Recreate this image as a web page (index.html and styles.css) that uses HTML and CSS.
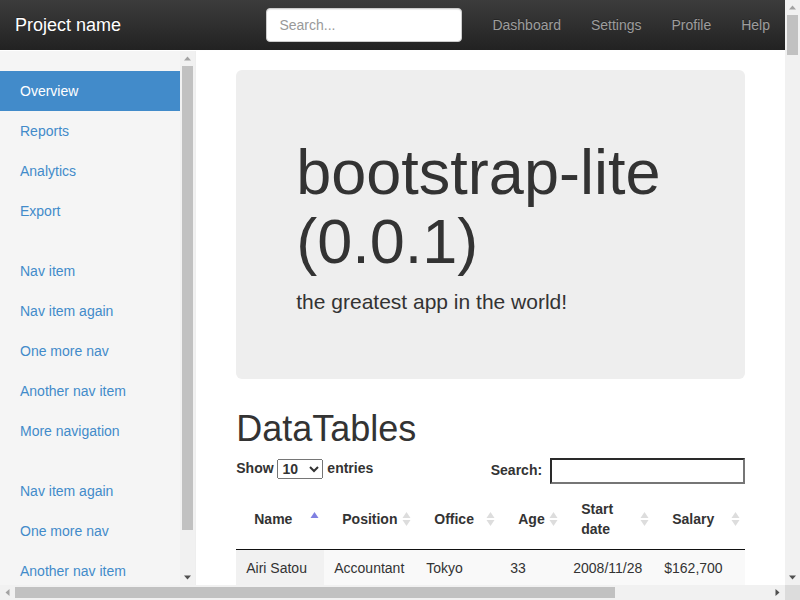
FILE: index.html
```html
<!DOCTYPE html>
<html lang="en">
<head>
<meta charset="utf-8">
<title>bootstrap-lite</title>
<link rel="stylesheet" href="styles.css">
</head>
<body>
<nav class="navbar">
  <a class="brand" href="#">Project name</a>
  <div class="navbar-right">
    <form class="navbar-form">
      <input class="search" type="text" placeholder="Search...">
    </form>
    <ul class="navbar-nav">
      <li><a href="#">Dashboard</a></li>
      <li><a href="#">Settings</a></li>
      <li><a href="#">Profile</a></li>
      <li><a href="#">Help</a></li>
    </ul>
  </div>
</nav>

<aside class="sidebar">
  <div class="sidebar-inner">
    <ul class="nav-sidebar">
      <li class="active"><a href="#">Overview</a></li>
      <li><a href="#">Reports</a></li>
      <li><a href="#">Analytics</a></li>
      <li><a href="#">Export</a></li>
    </ul>
    <ul class="nav-sidebar">
      <li><a href="#">Nav item</a></li>
      <li><a href="#">Nav item again</a></li>
      <li><a href="#">One more nav</a></li>
      <li><a href="#">Another nav item</a></li>
      <li><a href="#">More navigation</a></li>
    </ul>
    <ul class="nav-sidebar">
      <li><a href="#">Nav item again</a></li>
      <li><a href="#">One more nav</a></li>
      <li><a href="#">Another nav item</a></li>
    </ul>
  </div>
  <div class="vscroll">
    <svg class="sb-btn" width="15" height="15" viewBox="0 0 15 15"><polygon class="arrow-off" points="4,9.5 7.5,5.5 11,9.5"/></svg>
    <div class="vtrack"><div class="thumb sidebar-thumb"></div></div>
    <svg class="sb-btn" width="15" height="15" viewBox="0 0 15 15"><polygon class="arrow-on" points="4,5.5 11,5.5 7.5,9.5"/></svg>
  </div>
</aside>

<main class="main">
  <div class="jumbotron">
    <h1 class="jumbo-title">bootstrap-lite (0.0.1)</h1>
    <p class="jumbo-lead">the greatest app in the world!</p>
  </div>

  <h1 class="section-title">DataTables</h1>

  <div class="dt-wrapper">
    <div class="dt-controls">
      <label class="dt-length">Show <select class="dt-select"><option>10</option><option>25</option><option>50</option><option>100</option></select> entries</label>
      <label class="dt-filter">Search: <input class="dt-search" type="search"></label>
    </div>

    <table class="datatable">
      <colgroup>
        <col class="c-name"><col class="c-pos"><col class="c-office"><col class="c-age"><col class="c-date"><col class="c-salary">
      </colgroup>
      <thead>
        <tr>
          <th>Name<svg class="sort-icon" width="9" height="15" viewBox="0 0 9 15"><polygon class="sort-asc" points="0.5,6.5 4.5,0.5 8.5,6.5"/></svg></th>
          <th>Position<svg class="sort-icon" width="9" height="15" viewBox="0 0 9 15"><polygon class="sort-both" points="0.5,6.5 4.5,0.5 8.5,6.5"/><polygon class="sort-both" points="0.5,8.5 8.5,8.5 4.5,14.5"/></svg></th>
          <th>Office<svg class="sort-icon" width="9" height="15" viewBox="0 0 9 15"><polygon class="sort-both" points="0.5,6.5 4.5,0.5 8.5,6.5"/><polygon class="sort-both" points="0.5,8.5 8.5,8.5 4.5,14.5"/></svg></th>
          <th>Age<svg class="sort-icon" width="9" height="15" viewBox="0 0 9 15"><polygon class="sort-both" points="0.5,6.5 4.5,0.5 8.5,6.5"/><polygon class="sort-both" points="0.5,8.5 8.5,8.5 4.5,14.5"/></svg></th>
          <th>Start date<svg class="sort-icon" width="9" height="15" viewBox="0 0 9 15"><polygon class="sort-both" points="0.5,6.5 4.5,0.5 8.5,6.5"/><polygon class="sort-both" points="0.5,8.5 8.5,8.5 4.5,14.5"/></svg></th>
          <th>Salary<svg class="sort-icon" width="9" height="15" viewBox="0 0 9 15"><polygon class="sort-both" points="0.5,6.5 4.5,0.5 8.5,6.5"/><polygon class="sort-both" points="0.5,8.5 8.5,8.5 4.5,14.5"/></svg></th>
        </tr>
      </thead>
      <tbody>
        <tr class="odd"><td class="sorting_1">Airi Satou</td><td>Accountant</td><td>Tokyo</td><td>33</td><td>2008/11/28</td><td>$162,700</td></tr>
        <tr class="even"><td class="sorting_1">Angelica Ramos</td><td>Chief Executive Officer (CEO)</td><td>London</td><td>47</td><td>2009/10/09</td><td>$1,200,000</td></tr>
        <tr class="odd"><td class="sorting_1">Ashton Cox</td><td>Junior Technical Author</td><td>San Francisco</td><td>66</td><td>2009/01/12</td><td>$86,000</td></tr>
        <tr class="even"><td class="sorting_1">Bradley Greer</td><td>Software Engineer</td><td>London</td><td>41</td><td>2012/10/13</td><td>$132,000</td></tr>
        <tr class="odd"><td class="sorting_1">Brenden Wagner</td><td>Software Engineer</td><td>San Francisco</td><td>28</td><td>2011/06/07</td><td>$206,850</td></tr>
      </tbody>
    </table>
  </div>
</main>

<div class="page-vscroll">
  <svg class="sb-btn" width="15" height="15" viewBox="0 0 15 15"><polygon class="arrow-off" points="4,9.5 7.5,5.5 11,9.5"/></svg>
  <div class="vtrack"><div class="thumb page-vthumb"></div></div>
  <svg class="sb-btn" width="15" height="15" viewBox="0 0 15 15"><polygon class="arrow-on" points="4,5.5 11,5.5 7.5,9.5"/></svg>
</div>
<div class="page-hscroll">
  <svg class="sb-btn" width="15" height="15" viewBox="0 0 15 15"><polygon class="arrow-off" points="9.5,4 5.5,7.5 9.5,11"/></svg>
  <div class="htrack"><div class="thumb page-hthumb"></div></div>
  <svg class="sb-btn" width="15" height="15" viewBox="0 0 15 15"><polygon class="arrow-on" points="5.5,4 9.5,7.5 5.5,11"/></svg>
</div>
<div class="scroll-corner"></div>
</body>
</html>
```

FILE: styles.css
```css
* { box-sizing: border-box; }

html, body { margin: 0; }

html { overflow: hidden; }

body {
  margin-right: 15px;
  padding-top: 50px;
  font-family: "Liberation Sans", Arial, sans-serif;
  font-size: 14px;
  line-height: 1.42857;
  color: #333;
  background: #fff;
}

a { text-decoration: none; }

/* Navbar */
.navbar {
  position: fixed;
  top: 0;
  left: 0;
  right: 15px;
  height: 50px;
  z-index: 1030;
  display: flex;
  align-items: stretch;
  background: linear-gradient(to bottom, #3c3c3c 0%, #222 100%);
}

.brand {
  padding: 15px;
  font-size: 18px;
  line-height: 20px;
  color: #fff;
  text-shadow: 0 -1px 0 rgba(0, 0, 0, .25);
}

.navbar-right {
  margin-left: auto;
  display: flex;
  align-items: stretch;
}

.navbar-form {
  margin: 0;
  padding: 8px 15px;
}

.search {
  display: block;
  width: 196px;
  height: 34px;
  padding: 6px 12px;
  font: 14px "Liberation Sans", Arial, sans-serif;
  color: #555;
  background: #fff;
  border: 1px solid #ccc;
  border-radius: 4px;
  box-shadow: inset 0 1px 1px rgba(0, 0, 0, .075);
}

.search::placeholder { color: #999; }

.navbar-nav {
  list-style: none;
  margin: 0;
  padding: 0;
  display: flex;
}

.navbar-nav a {
  display: block;
  padding: 15px;
  line-height: 20px;
  color: #9d9d9d;
  text-shadow: 0 -1px 0 rgba(0, 0, 0, .25);
}

/* Sidebar */
.sidebar {
  position: fixed;
  top: 51px;
  bottom: 15px;
  left: 0;
  width: 196px;
  z-index: 1000;
  display: flex;
  background: #f5f5f5;
  border-right: 1px solid #eee;
}

.sidebar-inner {
  flex: 1;
  min-width: 0;
  padding: 20px;
  overflow: hidden;
}

.nav-sidebar {
  list-style: none;
  padding: 0;
  margin: 0 -20px 20px -20px;
}

.nav-sidebar a {
  display: block;
  padding: 10px 20px;
  line-height: 20px;
  color: #428bca;
}

.nav-sidebar .active a {
  color: #fff;
  background: #428bca;
}

/* Fake classic scrollbars */
.vscroll,
.page-vscroll {
  width: 15px;
  display: flex;
  flex-direction: column;
  background: #f1f1f1;
}

.page-vscroll {
  position: fixed;
  top: 0;
  right: 0;
  bottom: 15px;
  z-index: 2000;
}

.page-hscroll {
  position: fixed;
  left: 0;
  right: 15px;
  bottom: 0;
  height: 15px;
  z-index: 2000;
  display: flex;
  background: #f1f1f1;
}

.scroll-corner {
  position: fixed;
  right: 0;
  bottom: 0;
  width: 15px;
  height: 15px;
  z-index: 2000;
  background: #dcdcdc;
}

.sb-btn {
  display: block;
  flex: none;
}

.vtrack,
.htrack {
  flex: 1;
  display: flex;
}

.vtrack { flex-direction: column; }

.thumb { background: #c1c1c1; }

.sidebar-thumb {
  height: 464px;
  margin: 0 2px;
}

.page-vthumb {
  height: 40px;
  margin: 0 2px;
}

.page-hthumb {
  width: 600px;
  margin: 2px 0;
}

.arrow-off { fill: #a3a3a3; }
.arrow-on { fill: #505050; }

/* Main */
.main {
  margin-left: 25%;
  width: 75%;
  padding: 20px 40px;
}

.jumbotron {
  padding: 48px 60px;
  margin-bottom: 30px;
  background: #eee;
  border-radius: 6px;
}

.jumbo-title {
  margin: 20px 0 10px;
  font-size: 63px;
  font-weight: 500;
  line-height: 1.1;
  color: #333;
}

.jumbo-lead {
  margin: 0 0 14px;
  font-size: 21px;
  font-weight: 200;
  line-height: 1.42857;
}

.section-title {
  margin: 20px 0 10px;
  font-size: 36px;
  font-weight: 500;
  line-height: 1.1;
}

/* DataTables */
.dt-controls {
  display: flex;
  justify-content: space-between;
  align-items: flex-start;
}

.dt-length,
.dt-filter {
  display: flex;
  align-items: center;
  font-weight: bold;
  white-space: pre;
}

.dt-length {
  height: 20px;
  margin-top: 1px;
}

.dt-select {
  width: 46px;
  height: 20px;
  margin: 0;
  font: bold 14px "Liberation Sans", Arial, sans-serif;
  color: #333;
}

.dt-search {
  width: 195px;
  height: 26px;
  margin: 0 0 0 4px;
  padding: 1px 2px;
  font: 14px "Liberation Sans", Arial, sans-serif;
  background: #fff;
  border-width: 2px;
  border-style: solid;
  border-color: #2a2a2a #767676 #767676 #2a2a2a;
  border-radius: 0;
  outline: none;
}

.datatable {
  width: 100%;
  margin-top: 5px;
  table-layout: fixed;
  border-collapse: separate;
  border-spacing: 0;
}

.c-name { width: 88px; }
.c-pos { width: 92px; }
.c-office { width: 84px; }
.c-age { width: 63px; }
.c-date { width: 91px; }
.c-salary { width: 91px; }

.datatable th {
  position: relative;
  padding: 10px 18px;
  text-align: left;
  font-weight: bold;
  line-height: 20px;
  border-bottom: 1px solid #111;
}

.sort-icon {
  position: absolute;
  right: 5px;
  top: 50%;
  transform: translateY(-50%);
}

.sort-asc { fill: #7f80e2; }
.sort-both { fill: #dddddd; }

.datatable td {
  padding: 8px 10px;
  line-height: 20px;
  vertical-align: top;
  overflow: hidden;
  white-space: nowrap;
}

.datatable tr.odd td { background: #f9f9f9; }
.datatable tr.odd td.sorting_1 { background: #f1f1f1; }
.datatable tr.even td.sorting_1 { background: #fafafa; }
```
